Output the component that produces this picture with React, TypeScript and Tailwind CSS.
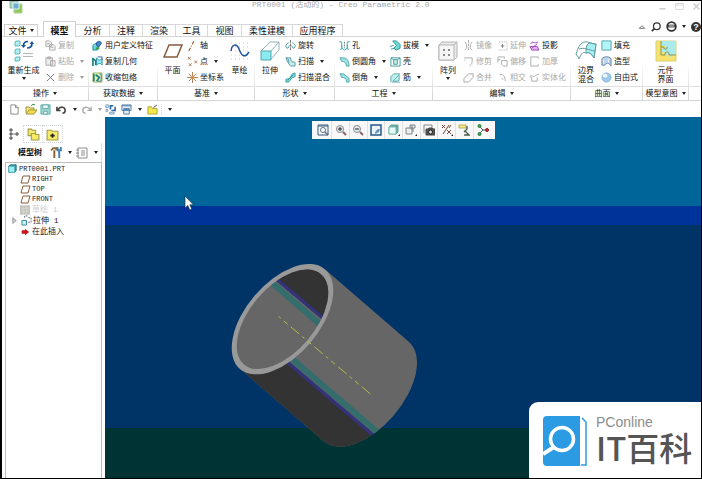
import type { ReactNode } from 'react'

type IconProps = { children: ReactNode; className?: string; box?: string }

// Line icon on a 12 unit grid unless another box is given
const Icon = ({ children, className = 'size-[11px]', box = '0 0 12 12' }: IconProps) => (
  <svg viewBox={box} className={`shrink-0 ${className}`} fill="none" stroke="currentColor" aria-hidden="true">
    {children}
  </svg>
)

const Arrow = ({ className = 'text-[#222]' }: { className?: string }) => (
  <svg viewBox="0 0 4 3" className={`h-[3px] w-[4px] shrink-0 ${className}`} aria-hidden="true">
    <path d="M0 0h4L2 3z" fill="currentColor" />
  </svg>
)

const icons = {
  regenerate: (
    <Icon className="h-[22px] w-[20px]" box="0 0 20 22">
      <g fill="#b5eef0" stroke="#3fa9ae" strokeWidth=".8">
        <path d="M1 2l1-1h4v4L5 6H1zM1 10l1-1h4v4l-1 1H1zM1 18l1-1h4v3l-1 1H1z" />
      </g>
      <path d="M14 1.500c-3 0-4.500 1.500-4.500 4M13 8c3 0 5-1 5-4.500" stroke="#17559b" strokeWidth="1.700" />
      <path d="M7 5h5L9.500 8zM15.500 4h4.500l-2-3z" fill="#17559b" stroke="none" />
      <path d="M9 13.500h10M9 16.500h10" stroke="#b7b7b7" />
    </Icon>
  ),
  copy: (
    <Icon>
      <path d="M1 1h4l2 2v4H1zM5 5h4l2 2v4H5z" fill="#f4f4f4" />
      <path d="M2 4h3M6 8h3" />
    </Icon>
  ),
  paste: (
    <Icon>
      <path d="M1 2h7v8H1zM3 1h3v2H3zM6 5h5v6H6z" fill="#ededed" />
    </Icon>
  ),
  remove: (
    <Icon className="size-[11px] text-gray-500">
      <path d="M2 2l8 8M10 2l-8 8" />
    </Icon>
  ),
  udf: (
    <Icon>
      <path d="M1 6l2-2h4v5l-1 2H1z" fill="#72d6de" stroke="#168b9b" />
      <path d="M5 3c2-3 6-1 5 1l-3 4-2-2z" fill="#4989ca" stroke="#1c559b" />
      <path d="M4 9h4" stroke="#3ba338" strokeWidth="2" />
    </Icon>
  ),
  copyGeom: (
    <Icon>
      <path d="M1 2v9M1 3l3 2v5" stroke="#168084" strokeWidth="1.800" />
      <path d="M5 2c2 3 4 3 6 1v7c-2-3-4-2-6 0z" fill="#9ce9ed" stroke="#258ea1" />
      <path d="M6 1h5v3" stroke="#2d61a8" />
    </Icon>
  ),
  shrink: (
    <Icon>
      <path d="M1 1h10v10H1z" fill="#e7f4ae" stroke="#a3b765" />
      <path d="M2 2v8M4 3l4 3-3 4" stroke="#168084" strokeWidth="1.800" />
      <path d="M8 2h2v8H6" stroke="#3977b5" />
    </Icon>
  ),
  plane: (
    <Icon className="h-[22px] w-[20px]" box="0 0 20 22">
      <path d="M6 5h13l-5 12H1z" stroke="#885a3e" strokeWidth="1.500" />
    </Icon>
  ),
  axis: (
    <Icon>
      <path d="M2 12L8 0" stroke="#9e6439" strokeWidth="1.300" strokeDasharray="4 1.5 1 1.5" />
    </Icon>
  ),
  point: (
    <Icon>
      <path d="M1 1l3 3M4 1L1 4M2 8l3 3M5 8l-3 3M8 5l3 3M11 5L8 8" stroke="#9e6439" strokeWidth=".9" />
    </Icon>
  ),
  csys: (
    <Icon>
      <path d="M6 0v12M0 6h12M2 2l8 8M10 2l-8 8" stroke="#a06a38" strokeWidth=".9" />
      <path d="M4 6h4" stroke="#df9b47" strokeWidth="2" />
    </Icon>
  ),
  sketch: (
    <Icon className="h-[22px] w-[20px]" box="0 0 20 22">
      <path d="M1 3h19M1 7h19M1 11h19M1 15h19M1 19h19" stroke="#b6c9d5" strokeDasharray="1 3" />
      <path d="M1 11C2 3 7 4 9 9c3 8 6 9 10 3" stroke="#20529a" strokeWidth="1.500" />
    </Icon>
  ),
  extrude: (
    <Icon className="h-[22px] w-[20px]" box="0 0 20 22">
      <path d="M1 11L10 2h9v8l-8 9M11 11l8-9" stroke="#8fb3b6" />
      <path d="M1 11h10v9H1z" fill="#8aeaf0" stroke="#4fa9ae" />
    </Icon>
  ),
  revolve: (
    <Icon>
      <path d="M6 0v12" stroke="#666" strokeDasharray="3 1" />
      <path d="M4 3C0 5 0 8 3 9l2-3M8 3c4 2 4 5 1 6L7 6" stroke="#368c91" />
    </Icon>
  ),
  sweep: (
    <Icon>
      <path d="M1 2h5l1 4 4 1v4H6L3 7z" fill="#c0ecee" stroke="#5c9ea3" />
      <path d="M1 2l3 2v4" stroke="#5c9ea3" />
    </Icon>
  ),
  sweptBlend: (
    <Icon>
      <path d="M1 8l4-1 3-5 3-1v4L7 7l-3 4H1z" fill="#73d9dc" stroke="#409a9c" />
      <path d="M3 9l6-6" stroke="#409a9c" />
    </Icon>
  ),
  hole: (
    <Icon>
      <path d="M0 2h3v8H1M12 2H9v8h2M3 5v4l3 2 3-2V5" stroke="#38aeb4" />
      <path d="M6 2v7" stroke="#777" strokeDasharray="2 1" />
    </Icon>
  ),
  round: (
    <Icon>
      <path d="M1 2h4c4 0 6 4 6 9H8C8 7 6 6 3 6z" fill="#9ee2e3" stroke="#4fa6a9" />
    </Icon>
  ),
  chamfer: (
    <Icon>
      <path d="M1 2h4l6 5v4H8V8L5 6H3z" fill="#9ee2e3" stroke="#4fa6a9" />
    </Icon>
  ),
  draft: (
    <Icon>
      <path d="M3 1h4l4 4v4l-4 2-3-2 3-3z" fill="#6cdbd7" stroke="#2e9090" />
      <path d="M0 7l4-1M1 10l4-1" stroke="#2e9090" />
    </Icon>
  ),
  shell: (
    <Icon>
      <path d="M1 2h10v9H1z" stroke="#3b989b" />
      <path d="M4 4h4v5H4z" fill="#bff2f2" stroke="#3b989b" />
      <path d="M1 2l3 2M11 2L8 4" stroke="#3b989b" />
    </Icon>
  ),
  rib: (
    <Icon>
      <path d="M1 11V5l3-3h7M2 11h9M3 10L10 3v6l-2 1z" fill="#baf0ec" stroke="#5fa8a8" />
    </Icon>
  ),
  pattern: (
    <Icon className="h-[22px] w-[20px]" box="0 0 20 22">
      <path d="M1 5l3-3h15v15l-3 3H1z" fill="#e9e9e9" stroke="#b5b5b5" />
      <path d="M1 5h15v15H1zM16 5l3-3" fill="#f6f6f6" stroke="#b5b5b5" />
      <path d="M5 10h2M10 10h2M5 15h2M10 15h2" stroke="#8a8a8a" strokeWidth="2" />
    </Icon>
  ),
  mirror: (
    <Icon>
      <path d="M6 0v12" strokeDasharray="3 1" />
      <path d="M2 2l2 3v4l-2 2M10 2L8 5v4l2 2" />
    </Icon>
  ),
  trim: (
    <Icon>
      <path d="M2 2h8v4c0 3-2 4-3 5" />
      <path d="M2 2v3" strokeDasharray="1 1" />
    </Icon>
  ),
  merge: (
    <Icon>
      <path d="M1 7l5-5h5v4l-5 5H1z" fill="#fafafa" />
    </Icon>
  ),
  extend: (
    <Icon>
      <path d="M2 2h9v9H2" strokeDasharray="1 1" />
      <path d="M4 6.500h4M6 4.500v4" stroke="#777" />
    </Icon>
  ),
  offset: (
    <Icon>
      <path d="M1 7V1h7v2M1 4h3M5 5h6v6H7L5 9z" />
    </Icon>
  ),
  intersect: (
    <Icon>
      <path d="M3 3c4-1 6 2 6 7M5 7l2 1" />
    </Icon>
  ),
  project: (
    <Icon>
      <path d="M1 7h8l2 4H3zM2 4c2-4 4 1 8-2" fill="#ddb1ee" stroke="#a043b6" />
      <path d="M3 9l6-5" stroke="#a043b6" />
    </Icon>
  ),
  thicken: (
    <Icon>
      <path d="M10 1H2v10h8M10 1v2M10 9v2" />
    </Icon>
  ),
  solidify: (
    <Icon>
      <path d="M1 5c2-3 3 2 6-1l4-2M3 6v4h6V6M1 5l2 1" />
    </Icon>
  ),
  boundary: (
    <Icon className="h-[22px] w-[22px]" box="0 0 22 22">
      <path d="M7 3c5-3 9 1 14 1-1 5-1 9-2 14-3-5-5-6-8-5-4-2-5 2-7 6-1-3-2-4-3-4C2 10 4 5 7 3z" fill="#fff" stroke="#5f9aa0" />
      <path d="M14 3c-3 2-3 6-3 10 3-1 5 0 8 5 1-5 1-9 2-14-3 0-5-1-7-1z" fill="#a5f0f2" stroke="#5f9aa0" />
      <path d="M4 9c5-2 9 1 16 2" stroke="#5f9aa0" />
    </Icon>
  ),
  fill: (
    <Icon>
      <path d="M1 1h10v10H1z" fill="#b4f3f7" stroke="#4ba3a8" />
    </Icon>
  ),
  style: (
    <Icon>
      <path d="M1 10V3c3-3 7-3 10 0v8c-3-4-5-4-7-1z" fill="#b9d3ea" stroke="#6481a8" />
      <path d="M3 4v4M8 3v4" stroke="#fff" />
    </Icon>
  ),
  freestyle: (
    <Icon>
      <circle cx="6" cy="6" r="5" fill="#9fc9e9" stroke="#87b2d2" />
      <ellipse cx="4.500" cy="4" rx="2.500" ry="2" fill="#eefaff" stroke="none" />
    </Icon>
  ),
  component: (
    <Icon className="h-[22px] w-[22px]" box="0 0 22 22">
      <path d="M1 1h20v20H1z" fill="#f8e26a" stroke="#d9cf79" />
      <path
        d="M6 1h15v14h-4c2 3-5 3-3 0h-4v-3c-4 2-5-4-1-4h1V6H6z"
        fill="#abeaea"
        stroke="none"
      />
      <path d="M6 1v6h3c-1 3 4 3 3 0M6 7v8h4c-1-4 5-4 4 0h7" stroke="#8a9455" />
    </Icon>
  ),
}

const CJK = 'font-["Liberation_Sans","Noto_Sans_CJK_SC",sans-serif]'

type ToolProps = { icon: ReactNode; label: string; menu?: boolean; off?: boolean }

const Tool = ({ icon, label, menu, off }: ToolProps) => (
  <button
    disabled={off}
    className="flex h-4 items-center gap-[2px] whitespace-nowrap text-[#111] disabled:text-[#a9a9a9]"
  >
    {icon}
    <span>{label}</span>
    {menu && (
      <span className="pl-1">
        <Arrow className={off ? 'text-[#999]' : 'text-[#222]'} />
      </span>
    )}
  </button>
)

const Column = ({ children, className = '' }: { children: ReactNode; className?: string }) => (
  <div className={`flex flex-col items-start ${className}`}>{children}</div>
)

type BigToolProps = { icon: ReactNode; lines: string[]; menu?: boolean; className?: string }

const BigTool = ({ icon, lines, menu, className = 'w-[30px]' }: BigToolProps) => (
  <button className={`flex h-12 shrink-0 flex-col items-center pt-[3px] ${className}`}>
    {icon}
    <span className="mt-1 leading-[9px] whitespace-nowrap">
      {lines.map((line) => (
        <span key={line} className="block">
          {line}
        </span>
      ))}
    </span>
    {menu && (
      <span className="pt-[2px]">
        <Arrow />
      </span>
    )}
  </button>
)

type GroupProps = { title: string; children: ReactNode; className: string; body?: string }

const Group = ({ title, children, className, body = '' }: GroupProps) => (
  <>
    <section className={`flex shrink-0 flex-col ${className}`}>
      <div className={`flex h-[49px] ${body}`}>{children}</div>
      <button className="flex h-[14px] items-center justify-center gap-1 border-t border-[#dedede] whitespace-nowrap">
        {title}
        <Arrow />
      </button>
    </section>
    <div className="w-px shrink-0 bg-linear-to-b from-white from-40% to-[#d2d2d2]" />
  </>
)

const TitleBar = () => (
  <header className="flex h-5 items-start">
    <div className="w-[250px] pl-[7px]">
      <Icon className="h-[13px] w-[14px]" box="0 0 14 13">
        <path d="M1 0h8v7H1z" fill="#a9d6c0" stroke="#7cb8a0" />
        <path d="M5 3h8v9H5z" fill="#8ccb59" stroke="#b5d1a4" />
        <path d="M4 2h6v6H4z" fill="#72a8d4" stroke="#dff0ec" />
      </Icon>
    </div>
    <h1 className='font-["Liberation_Mono","Noto_Sans_CJK_SC",monospace] text-[8px] leading-[8px] whitespace-pre text-[#a8a8a8]'>
      PRT0001 (活动的) - Creo Parametric 2.0
    </h1>
    <div className="ml-auto flex gap-2 pt-px text-[#cfcfcf]">
      <button aria-label="最小化">
        <Icon className="size-[9px]">
          <path d="M2 9h8" strokeWidth="2" />
        </Icon>
      </button>
      <button aria-label="最大化">
        <Icon className="size-[9px]">
          <path d="M1 2h10v8H1zM1 4h10" />
        </Icon>
      </button>
      <button aria-label="关闭">
        <Icon className="size-[9px]">
          <path d="M2 2l8 8M10 2l-8 8" strokeWidth="2" />
        </Icon>
      </button>
    </div>
  </header>
)

const tabs = [
  { label: '分析', width: 'w-[34px]' },
  { label: '注释', width: 'w-[33px]' },
  { label: '渲染', width: 'w-[33px]' },
  { label: '工具', width: 'w-[32px]' },
  { label: '视图', width: 'w-[34px]' },
  { label: '柔性建模', width: 'w-[51px]' },
  { label: '应用程序', width: 'w-[50px]' },
]

const TabBar = () => (
  <nav className="flex h-[15px] items-end pl-[2px] text-[9px] leading-[10px] whitespace-nowrap text-[#111]">
    <button className="flex h-3 w-[34px] items-center justify-center gap-[3px] border border-b-0 border-[#cfcfcf]">
      文件
      <Arrow />
    </button>
    <div className="w-[5px]" />
    {/* Active tab sits over the ribbon's top line */}
    <button className="z-10 -mb-px h-4 w-[33px] border border-b-0 border-[#cfcfcf] bg-white pt-[2px] font-bold">
      模型
    </button>
    {tabs.map((tab) => (
      <button key={tab.label} className={`h-3 border-t border-r border-[#d8d8d8] ${tab.width}`}>
        {tab.label}
      </button>
    ))}
    <div className="ml-auto flex h-full items-center gap-[5px] pb-[4px] text-[#333]">
      <button aria-label="折叠功能区">
        <Icon className="size-[8px]">
          <path d="M2 8l4-4 4 4z" />
        </Icon>
      </button>
      <button aria-label="搜索">
        <Icon className="size-[10px]">
          <circle cx="7" cy="5" r="4" strokeWidth="1.500" />
          <path d="M4 8l-3 3" strokeWidth="2" />
        </Icon>
      </button>
      <button aria-label="资源" className="flex items-center gap-[5px]">
        <Icon className="size-[11px]">
          <circle cx="6" cy="6" r="4.800" strokeWidth="1.800" />
          <path d="M2 4h8v3H2z" fill="currentColor" stroke="none" />
          <path d="M3 5.500h6" stroke="#fff" />
        </Icon>
        <Arrow />
      </button>
      <button
        aria-label="帮助"
        className="flex size-[10px] items-center justify-center rounded-full bg-[#333] text-[9px] font-bold text-white"
      >
        ?
      </button>
    </div>
  </nav>
)

const Ribbon = () => (
  <div className="flex border-y border-[#d5d5d5] text-[8px] leading-[9px] text-[#111]">
    <Group title="操作" className="w-[86px]">
      <BigTool icon={icons.regenerate} lines={['重新生成']} menu className="w-[43px]" />
      <Column>
        <Tool icon={icons.copy} label="复制" off />
        <Tool icon={icons.paste} label="粘贴" menu off />
        <Tool icon={icons.remove} label="删除" menu off />
      </Column>
    </Group>
    <Group title="获取数据" className="w-[68px]" body="pl-[3px]">
      <Column>
        <Tool icon={icons.udf} label="用户定义特征" />
        <Tool icon={icons.copyGeom} label="复制几何" />
        <Tool icon={icons.shrink} label="收缩包络" />
      </Column>
    </Group>
    <Group title="基准" className="w-[96px]">
      <BigTool icon={icons.plane} lines={['平面']} className="w-[29px]" />
      <Column className="w-[38px]">
        <Tool icon={icons.axis} label="轴" />
        <Tool icon={icons.point} label="点" menu />
        <Tool icon={icons.csys} label="坐标系" />
      </Column>
      <BigTool icon={icons.sketch} lines={['草绘']} className="w-[29px]" />
    </Group>
    <Group title="形状" className="w-[79px]">
      <BigTool icon={icons.extrude} lines={['拉伸']} />
      <Column>
        <Tool icon={icons.revolve} label="旋转" />
        <Tool icon={icons.sweep} label="扫描" menu />
        <Tool icon={icons.sweptBlend} label="扫描混合" />
      </Column>
    </Group>
    <Group title="工程" className="w-[97px]" body="pl-1">
      <Column className="w-[51px]">
        <Tool icon={icons.hole} label="孔" />
        <Tool icon={icons.round} label="倒圆角" menu />
        <Tool icon={icons.chamfer} label="倒角" menu />
      </Column>
      <Column>
        <Tool icon={icons.draft} label="拔模" menu />
        <Tool icon={icons.shell} label="壳" />
        <Tool icon={icons.rib} label="筋" menu />
      </Column>
    </Group>
    <Group title="编辑" className="w-[137px]">
      <BigTool icon={icons.pattern} lines={['阵列']} menu />
      <Column className="w-[34px]">
        <Tool icon={icons.mirror} label="镜像" off />
        <Tool icon={icons.trim} label="修剪" off />
        <Tool icon={icons.merge} label="合并" off />
      </Column>
      <Column className="w-[32px]">
        <Tool icon={icons.extend} label="延伸" off />
        <Tool icon={icons.offset} label="偏移" off />
        <Tool icon={icons.intersect} label="相交" off />
      </Column>
      <Column>
        <Tool icon={icons.project} label="投影" />
        <Tool icon={icons.thicken} label="加厚" off />
        <Tool icon={icons.solidify} label="实体化" off />
      </Column>
    </Group>
    <Group title="曲面" className="w-[71px]">
      <BigTool icon={icons.boundary} lines={['边界', '混合']} />
      <Column>
        <Tool icon={icons.fill} label="填充" />
        <Tool icon={icons.style} label="造型" />
        <Tool icon={icons.freestyle} label="自由式" />
      </Column>
    </Group>
    <Group title="模型意图" className="w-[45px]">
      <BigTool icon={icons.component} lines={['元件', '界面']} className="w-full" />
    </Group>
    <div className="mt-[49px] h-[14px] flex-1 border-t border-[#dedede]" />
  </div>
)

const QuickAccess = () => (
  <div className="flex h-4 items-center pl-[7px]">
    <button aria-label="新建" className="w-4">
      <Icon>
        <path d="M2 1h5l3 3v7H2zM7 1v3h3" stroke="#888" />
      </Icon>
    </button>
    <button aria-label="打开" className="w-[15px]">
      <Icon className="size-[12px]">
        <path d="M1 10V4h3l1 1h4v2" fill="#f5e774" stroke="#a3933d" />
        <path d="M1 11l3-4h8l-3 4z" fill="#f5e052" stroke="#a3933d" />
        <path d="M6 3c1-2 3-2 4-1" stroke="#3d8b45" />
      </Icon>
    </button>
    <button aria-label="保存" className="w-4">
      <Icon>
        <path d="M1 1h10v10H1z" fill="#9ed9d2" stroke="#5faaa4" />
        <path d="M3 1h6v4H3zM4 8h4v3H4z" fill="#eefaf9" stroke="#5faaa4" />
      </Icon>
    </button>
    <button aria-label="撤消" className="flex w-[25px] items-center gap-[6px]">
      <Icon>
        <path d="M1 3v4h4M2 6c3-4 8-3 8 1 0 2-1 3-3 3" stroke="#444" strokeWidth="1.700" />
      </Icon>
      <Arrow />
    </button>
    <button aria-label="重做" disabled className="flex w-[24px] items-center gap-[6px]">
      <Icon>
        <path d="M11 3v4H7M10 6C7 2 2 3 2 7c0 2 1 3 3 3" stroke="#aaa" strokeWidth="1.500" />
      </Icon>
      <Arrow className="text-[#999]" />
    </button>
    <button aria-label="重新生成模型" className="w-4">
      <Icon>
        <path d="M1 1h3v3H1zM1 6h2v2H1zM5 9h5v2H5z" fill="#d3e4f3" stroke="#7da0bf" />
        <path d="M6 6V2h3M11 3v4H7" stroke="#2864a0" strokeWidth="1.700" />
      </Icon>
    </button>
    <button aria-label="窗口" className="flex w-[26px] items-center gap-[6px]">
      <Icon>
        <path d="M1 1h10v6H1zM3 5h6v6H3z" fill="#e1edf8" stroke="#507aa6" />
        <path d="M1 2h10M3 6h6" stroke="#507aa6" />
      </Icon>
      <Arrow />
    </button>
    <button aria-label="关闭窗口" className="w-[15px] border-r border-dotted border-gray-300">
      <Icon>
        <path d="M1 3h4l1 2h5v6H1z" fill="#f4e84b" stroke="#b0a43c" />
        <path d="M7 4l4-3" stroke="#555" />
      </Icon>
    </button>
    <button aria-label="自定义快速访问工具栏" className="pl-[6px]">
      <Arrow />
    </button>
  </div>
)

const PlaneMark = () => (
  <Icon className="h-[9px] w-[11px]" box="0 0 11 9">
    <path d="M3 1h7L8 8H1z" stroke="#8b5d3b" />
  </Icon>
)

const ModelTree = () => (
  <aside className="flex w-[103px] shrink-0 flex-col">
    <div className="flex h-[26px] items-end pl-[2px]">
      <button aria-label="模型树选项卡" className="flex h-[18px] w-[19px] items-center justify-center">
        <Icon className="size-[12px]">
          <path d="M2 1h2v2H2zM2 5h2v2H2zM2 9h2v2H2zM8 5h2v2H8z" stroke="#444" />
          <path d="M4 6h4" stroke="#888" />
        </Icon>
      </button>
      <button
        aria-label="文件夹浏览器"
        className="flex h-[18px] w-[20px] items-center justify-center border border-dotted border-gray-300"
      >
        <Icon className="size-[13px]">
          <path d="M1 1h3l1 1h3v5H1z" fill="#f6eb66" stroke="#a39c4b" />
          <path d="M4 5h3l1 1h3v5H4z" fill="#f6eb66" stroke="#a39c4b" />
        </Icon>
      </button>
      <button
        aria-label="收藏夹"
        className="flex h-[18px] w-[20px] items-center justify-center border border-l-0 border-dotted border-gray-300"
      >
        <Icon className="size-[13px]">
          <path d="M1 2h4l1 1h5v8H1z" fill="#f6eb66" stroke="#a39c4b" />
          <path d="M6 5v4M4 7h4" stroke="#222" strokeWidth="1.500" />
        </Icon>
      </button>
    </div>
    <div className="mr-[3px] flex h-[19px] items-center border-r border-[#dedede] pl-4 text-[8px]">
      <h2 className="w-8 font-bold whitespace-nowrap">模型树</h2>
      <button aria-label="设置" className="flex w-[26px] items-center gap-[5px]">
        <Icon className="size-[13px]">
          <path d="M1 4l2-2h3v2M4 4v7" stroke="#8f6531" strokeWidth="1.800" />
          <path d="M7 1v3h3V1M8.500 4v7" stroke="#4482b4" strokeWidth="1.800" />
        </Icon>
        <Arrow />
      </button>
      <button aria-label="显示" className="flex items-center gap-[6px]">
        <Icon className="size-[12px]">
          <path d="M2 1h9v10H2zM0 3h3M0 6h3M0 9h3M5 4h4M5 6h4M5 8h4" stroke="#8c8c8c" />
        </Icon>
        <Arrow />
      </button>
    </div>
    <ul className='mr-[3px] ml-[3px] flex-1 border border-b-0 border-[#bdbdbd] pl-[2px] font-["Liberation_Mono","Noto_Sans_CJK_SC",monospace] text-[7px] leading-[10px] whitespace-nowrap text-[#222]'>
      <li className="flex h-[11px] items-center gap-[2px]">
        <Icon className="size-[9px]">
          <path d="M1 3l2-2h8v8l-2 2H1z" fill="#288e9f" stroke="#267883" />
          <path d="M1 3h8v8H1z" fill="#9eeff0" stroke="#48a8b0" />
        </Icon>
        PRT0001.PRT
      </li>
      {['RIGHT', 'TOP', 'FRONT'].map((name) => (
        <li key={name} className="flex h-[10px] items-center gap-[1px] pl-[12px]">
          <PlaneMark />
          {name}
        </li>
      ))}
      <li className="flex h-[11px] items-center gap-[2px] pl-[12px] text-[8px] text-[#cdcdcd]">
        <Icon className="size-[10px]">
          <path d="M0 1h12v10H0z" fill="#c8c8be" stroke="#bbb" />
          <path d="M1 4h10M1 8h10M4 1v10M8 1v10" stroke="#ddd" strokeWidth=".6" />
        </Icon>
        草绘 1
      </li>
      <li className="flex h-[11px] items-center gap-[1px] pl-[3px] text-[8px]">
        <button aria-label="展开" className="w-[9px]">
          <Icon className="size-[7px] text-gray-500">
            <path d="M3 1l6 5-6 5z" fill="#ccc" />
          </Icon>
        </button>
        <Icon className="size-[11px]">
          <path d="M1 6h5v5H1z" fill="#bff3f5" stroke="#358494" />
          <path d="M4 3V1h4M8 3h3v5H8" stroke="#596f77" strokeDasharray="2 1" />
        </Icon>
        拉伸 1
      </li>
      <li className="flex h-[11px] items-center gap-[2px] pl-[12px] text-[8px]">
        <Icon className="size-[10px]">
          <path d="M2 4h4V2l5 4-5 4V8H2z" fill="#c4151c" stroke="none" />
        </Icon>
        在此插入
      </li>
    </ul>
  </aside>
)

const viewTools = [
  {
    label: '重新调整',
    art: (
      <>
        <path d="M1 1h10v10H1zM1 2h10" stroke="#375c82" />
        <circle cx="6" cy="6" r="2.500" fill="#fff" stroke="#5b6f86" />
        <path d="M8 8l3 3" stroke="#5b6f86" strokeWidth="1.500" />
      </>
    ),
  },
  {
    label: '放大',
    art: (
      <>
        <circle cx="5" cy="5" r="3.500" fill="#e5eef5" stroke="#888" />
        <path d="M3 5h4M5 3v4" stroke="#222" />
        <path d="M8 8l3 3" stroke="#8b6273" strokeWidth="2" />
      </>
    ),
  },
  {
    label: '缩小',
    art: (
      <>
        <circle cx="5" cy="5" r="3.500" fill="#e5eef5" stroke="#888" />
        <path d="M3 5h4" stroke="#222" />
        <path d="M8 8l3 3" stroke="#8b6273" strokeWidth="2" />
      </>
    ),
  },
  {
    label: '重画',
    art: (
      <>
        <path d="M1 1h10v10H1z" fill="#eef3f8" stroke="#24588b" strokeWidth="1.500" />
        <path d="M5 10c0-3 2-5 5-5l-1 3z" fill="#5e92c0" stroke="none" />
      </>
    ),
  },
  {
    label: '显示样式',
    art: (
      <>
        <path d="M1 3l2-2h7v7l-2 2H1z" fill="#61a8a1" stroke="#6fa8a2" />
        <path d="M1 3h7v7H1z" fill="#e6fbf8" stroke="#7db8b2" />
        <path d="M12 10v2h-2z" fill="#222" stroke="none" />
      </>
    ),
  },
  {
    label: '已命名视图',
    art: (
      <>
        <path d="M1 4h6v6H1zM5 1v3h5V1zM8 4v4" fill="#ededed" stroke="#7d878c" />
        <path d="M7 1v5" stroke="#7d878c" />
        <path d="M12 10v2h-2z" fill="#222" stroke="none" />
      </>
    ),
  },
  {
    label: '视图管理器',
    art: (
      <>
        <path d="M1 9V1h8v3" stroke="#858585" />
        <path d="M3 5h2l1-1h3l1 1h2v6H3z" fill="#555" stroke="#444" />
        <circle cx="7.500" cy="8" r="2" fill="#ddd" stroke="#222" />
      </>
    ),
  },
  {
    label: '基准显示过滤器',
    art: (
      <>
        <path d="M1 1l3 3M4 1L1 4M8 1L2 10M6 6l4 4M10 6l-4 4M10 1L8 4" stroke="#794a3c" />
        <path d="M12 10v2h-2z" fill="#222" stroke="none" />
      </>
    ),
  },
  {
    label: '注释显示',
    art: (
      <>
        <path d="M1 1h7v3H1z" fill="#f4e787" stroke="#c2b054" />
        <path d="M9 2v3L6 8M6 11h5L7 7" stroke="#4c5c48" strokeWidth="1.300" />
      </>
    ),
  },
  {
    label: '旋转中心',
    art: (
      <>
        <path d="M2 2l4 4-4 4M6 6h4" stroke="#555" />
        <circle cx="2.500" cy="2" r="1.500" fill="#39a64c" stroke="#22803a" />
        <circle cx="2.500" cy="10" r="1.500" fill="#39a64c" stroke="#22803a" />
        <circle cx="10" cy="6" r="1.500" fill="#cf2630" stroke="#8d1f2a" />
      </>
    ),
  },
]

const Scene = () => (
  <svg viewBox="105 117 596 361" preserveAspectRatio="xMidYMid slice" className="absolute inset-0 size-full" aria-hidden="true">
    <defs>
      <clipPath id="body">
        <path d="M325 269.200L408.700 341.700L323.700 441.300L240 368.800z" />
        <ellipse cx="366.200" cy="391.500" rx="65.500" ry="36.500" transform="rotate(-49.500 366.200 391.500)" />
      </clipPath>
      <clipPath id="bore">
        <ellipse cx="282.500" cy="319.300" rx="59.300" ry="32.500" transform="rotate(-49.500 282.500 319.300)" />
      </clipPath>
    </defs>
    <path d="M105 117h596v89H105z" fill="#006699" />
    <path d="M105 206h596v19H105z" fill="#003399" />
    <path d="M105 225h596v203H105z" fill="#003366" />
    <path d="M105 428h596v50H105z" fill="#003333" />
    {/* Outer wall */}
    <g clipPath="url(#body)">
      <path d="M220 250h210v210H220z" fill="#666666" />
      <path d="M230 314.700L400 458L300 478L220 400z" fill="#333333" />
      <path d="M250 323L410 460" stroke="#336e6c" strokeWidth="6" />
      <path d="M250 330.500L410 466.500" stroke="#333377" strokeWidth="3.500" />
    </g>
    {/* Rim and inner wall */}
    <ellipse cx="282.500" cy="319.200" rx="65.500" ry="36.500" transform="rotate(-49.500 282.500 319.200)" fill="#999999" />
    <g clipPath="url(#bore)">
      <path d="M220 250h130v130H220z" fill="#666666" />
      <path d="M260 265.300L340 332.500L350 250z" fill="#333333" />
      <path d="M260 272.500L340 341.500" stroke="#336e6c" strokeWidth="6" />
      <path d="M260 265.300L340 332.500" stroke="#333377" strokeWidth="3.500" />
    </g>
    <path d="M278.500 316.500L371 394.500" stroke="#b9b94a" strokeDasharray="3 4 5 4 11 4" fill="none" />
    <path d="M185 196v12l2.800-2.500 2 4.500 2-1-2-4.200h3.700z" fill="#fff" stroke="#123" strokeWidth=".6" />
  </svg>
)

const Badge = () => (
  <div className="absolute right-0 bottom-0 flex h-[76px] w-[172px] items-start rounded-tl-[9px] bg-white pt-[14px] pl-[14px]">
    <svg viewBox="0 0 44 50" className="h-[50px] w-[44px] shrink-0" aria-hidden="true">
      <path d="M4 0h33v50H4q-4 0-4-4V4q0-4 4-4z" fill="#2b9be3" />
      <path d="M39 2l4 4v43h-5" fill="none" stroke="#2b9be3" strokeWidth="1.500" />
      <circle cx="19" cy="23" r="11.500" fill="none" stroke="#fff" strokeWidth="3.500" />
      <path d="M11 31L0 38" stroke="#fff" strokeWidth="4" />
    </svg>
    <div className="pl-[9px] whitespace-nowrap">
      <div className='font-["Liberation_Sans",sans-serif] text-[14px] leading-[12px] text-[#8c8c8c]'>PConline</div>
      <div className='font-["Noto_Sans_CJK_SC",sans-serif] text-[33px] leading-[39px] font-medium text-[#555]'>
        IT百科
      </div>
    </div>
  </div>
)

const Viewport = () => (
  <main className="relative flex-1 overflow-hidden bg-[#003366] pt-1">
    <Scene />
    <div className="relative mx-auto grid h-[18px] w-[183px] grid-cols-10 bg-[#f8f8f8] px-[3px]">
      {viewTools.map((tool) => (
        <button
          key={tool.label}
          aria-label={tool.label}
          className="flex items-center justify-center border-r border-[#e2e2e2] last:border-r-0"
        >
          <Icon className="size-[12px]">{tool.art}</Icon>
        </button>
      ))}
    </div>
    <Badge />
  </main>
)

export default function App() {
  return (
    <div
      className={`flex h-screen flex-col overflow-hidden border border-l-2 border-black bg-white text-[#111] ${CJK}`}
    >
      <TitleBar />
      <TabBar />
      <Ribbon />
      <QuickAccess />
      <div className="flex min-h-0 flex-1">
        <ModelTree />
        <Viewport />
      </div>
    </div>
  )
}
